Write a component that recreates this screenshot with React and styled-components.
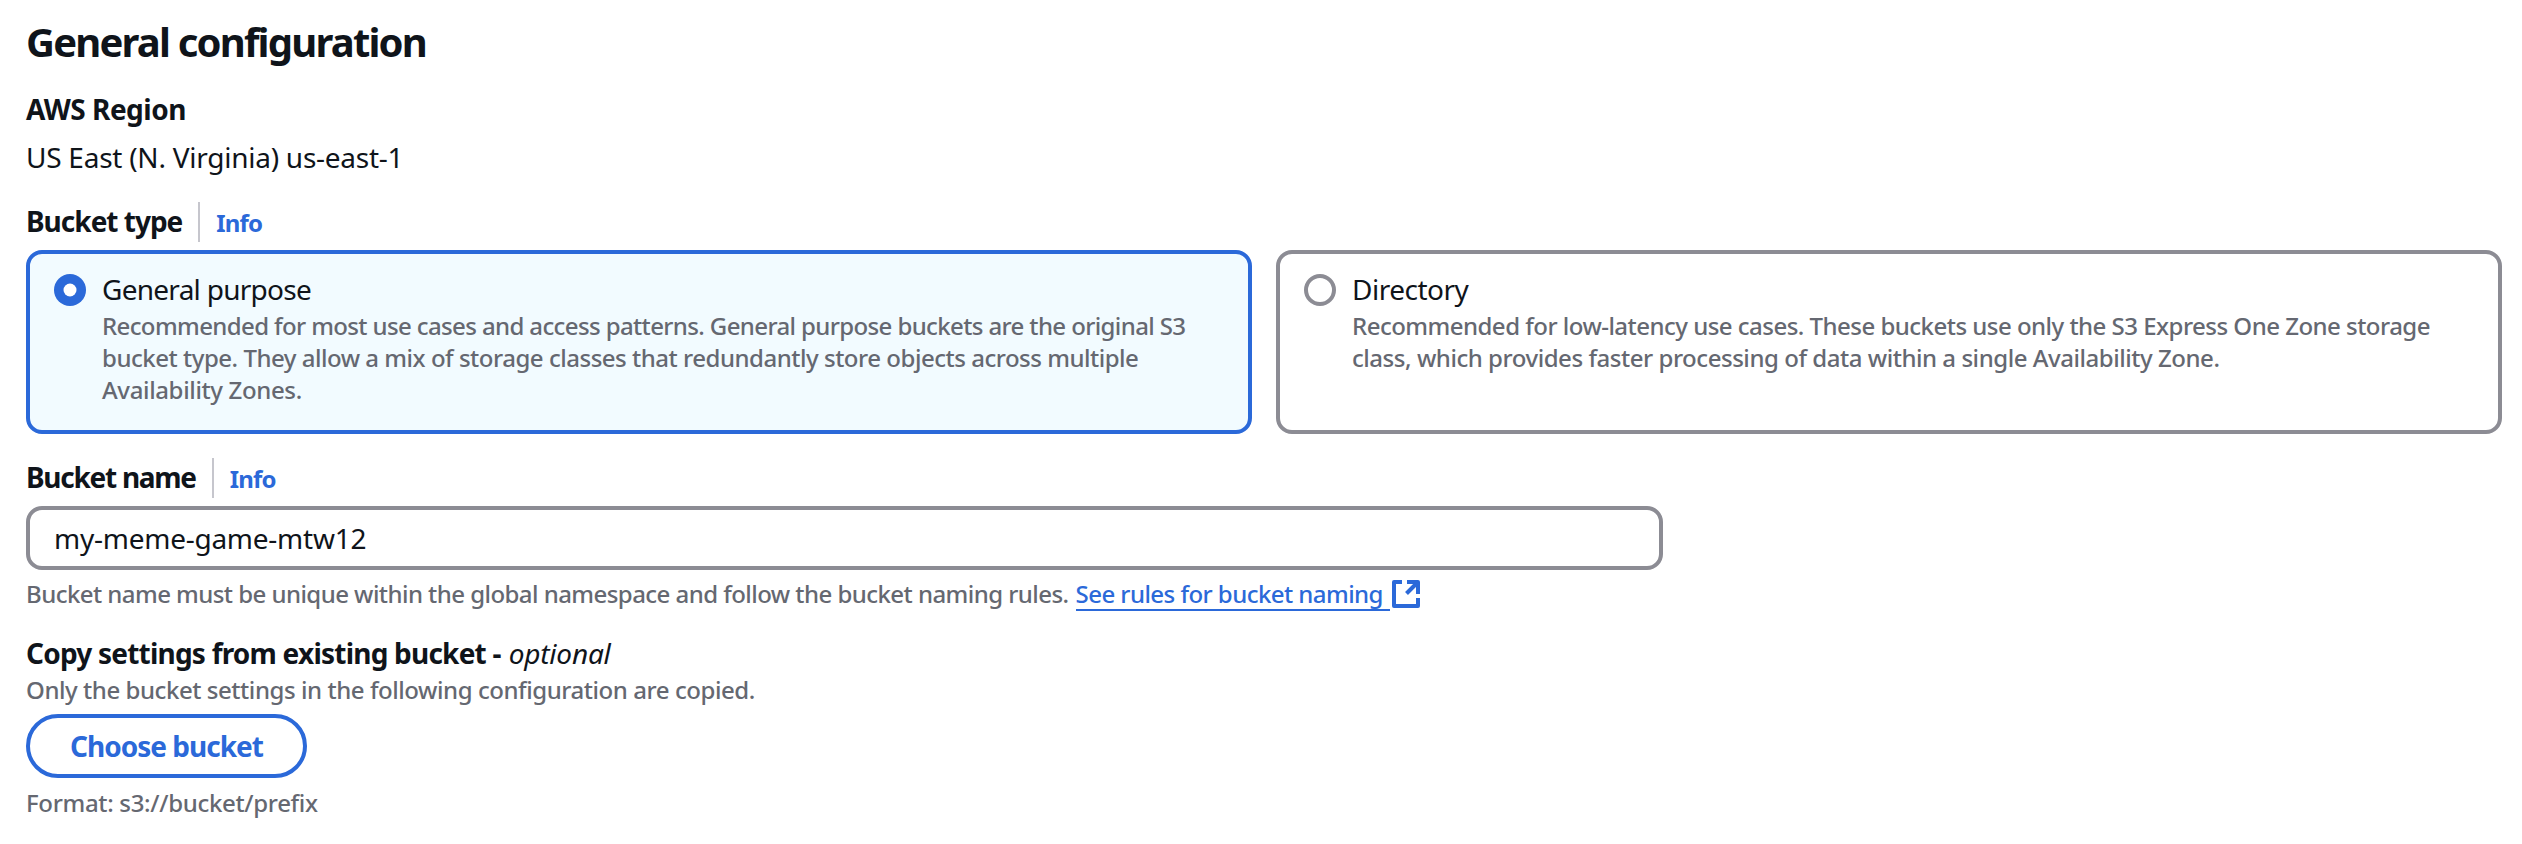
import React from 'react';
import styled, { createGlobalStyle } from 'styled-components';

const ink = '#0f141a';
const muted = '#656871';
const blue = '#2b69d9';
const grey = '#8c8c94';

const GlobalStyle = createGlobalStyle`
  * { box-sizing: border-box; }
  body {
    margin: 0;
    background: #fff;
    color: ${ink};
    font-family: "Noto Sans", "Open Sans", sans-serif;
  }
`;

const tracking = ({ $track = 0 }) => `letter-spacing: ${$track}px;`;

const Page = styled.main`
  display: flex;
  flex-direction: column;
  height: 844px;
  padding: 18px 20px 0 26px;
  white-space: nowrap;
`;

const Title = styled.h2`
  margin: 0 0 23px;
  font-size: 40px;
  font-weight: 700;
  line-height: 48px;
  ${tracking}
`;

const Label = styled.span`
  font-size: 28px;
  font-weight: 700;
  line-height: ${({ $line = 40 }) => $line}px;
  ${tracking}
`;

const Value = styled.span`
  font-size: 28px;
  font-weight: 400;
  line-height: 40px;
  ${tracking}
`;

const Region = styled.section`
  display: flex;
  flex-direction: column;
  gap: 8px;
  margin-bottom: 25px;
`;

const Field = styled.section`
  display: flex;
  flex-direction: column;
  gap: 8px;
  margin-bottom: ${({ $after = 24 }) => $after}px;
`;

const LabelRow = styled.div`
  display: flex;
  align-items: flex-start;
  height: 40px;
`;

const Divider = styled.span`
  width: 2px;
  height: 40px;
  margin: 0 16px;
  background: #c6c6cd;
`;

const InfoLink = styled.a`
  color: ${blue};
  font-size: 24px;
  font-weight: 700;
  line-height: 42px;
  letter-spacing: -0.85px;
`;

const Tiles = styled.div`
  display: grid;
  grid-template-columns: 1fr 1fr;
  gap: 24px;
`;

const Tile = styled.label`
  display: flex;
  gap: 16px;
  height: 184px;
  padding: 15px 24px;
  border: 4px solid ${({ $selected }) => ($selected ? blue : grey)};
  border-radius: 16px;
  background: ${({ $selected }) => ($selected ? '#f2fbff' : '#fff')};
`;

const RadioMark = styled.svg`
  flex: none;
  width: 32px;
  height: 32px;
  margin-top: 5px;
`;

const TileBody = styled.div`
  display: flex;
  flex-direction: column;
  gap: 1px;
`;

const Description = styled.div`
  display: flex;
  flex-direction: column;
`;

const Hint = styled.span`
  color: ${muted};
  font-size: 24px;
  font-weight: 500;
  line-height: 32px;
  ${tracking}
`;

const TextInput = styled.input`
  width: 1637px;
  height: 64px;
  padding: 0 24px;
  border: 4px solid ${grey};
  border-radius: 16px;
  outline: none;
  background: #fff;
  color: ${ink};
  font: 400 28px "Noto Sans", "Open Sans", sans-serif;
  letter-spacing: -0.25px;
`;

const HintRow = styled.div`
  display: flex;
  height: 32px;
`;

const RulesLink = styled.a`
  display: flex;
  gap: 2px;
  margin-left: 7px;
  color: ${blue};
`;

const RulesText = styled.span`
  height: 33px;
  padding-right: 7px;
  border-bottom: 2px solid ${blue};
  font-size: 24px;
  font-weight: 500;
  line-height: 32px;
  ${tracking}
`;

const ExternalSvg = styled.svg`
  width: 28px;
  height: 28px;
  margin-top: 2px;
`;

const CopySection = styled.section`
  display: flex;
  flex-direction: column;
  align-items: flex-start;
`;

const Heading = styled.div`
  display: flex;
  gap: 8px;
  margin-bottom: 1px;
`;

const Optional = styled.em`
  font-size: 28px;
  font-weight: 400;
  font-style: italic;
  line-height: 40px;
  ${tracking}
`;

const ChooseButton = styled.button`
  width: 281px;
  height: 64px;
  margin: 8px 0 9px;
  padding: 0;
  border: 4px solid ${blue};
  border-radius: 32px;
  background: #fff;
  color: ${blue};
  font: 700 28px "Noto Sans", "Open Sans", sans-serif;
  letter-spacing: -1px;
`;

function ExternalIcon() {
  return (
    <ExternalSvg viewBox="0 0 28 28" fill="none" stroke={blue} strokeWidth="4">
      <path d="M10 2H2v24h24v-8" strokeLinejoin="round" />
      <path d="M15 2h11v12" strokeLinejoin="round" />
      <path d="M26 2L14.5 13.5" />
    </ExternalSvg>
  );
}

function Radio({ selected }) {
  return (
    <RadioMark viewBox="0 0 32 32">
      {selected ? (
        <>
          <circle cx="16" cy="16" r="16" fill={blue} />
          <circle cx="16" cy="16" r="6.5" fill="#fff" />
        </>
      ) : (
        <circle cx="16" cy="16" r="14" fill="#fff" stroke={grey} strokeWidth="4" />
      )}
    </RadioMark>
  );
}

function BucketTile({ selected, name, nameTrack, lines }) {
  return (
    <Tile $selected={selected}>
      <Radio selected={selected} />
      <TileBody>
        <Value $track={nameTrack}>{name}</Value>
        <Description>
          {lines.map(([text, track]) => (
            <Hint key={text} $track={track}>{text}</Hint>
          ))}
        </Description>
      </TileBody>
    </Tile>
  );
}

export default function App() {
  return (
    <Page>
      <GlobalStyle />
      <Title $track={-1.8}>General configuration</Title>

      <Region>
        <Label $track={-0.5}>AWS Region</Label>
        <Value $track={-0.25}>US East (N. Virginia) us-east-1</Value>
      </Region>

      <Field>
        <LabelRow>
          <Label $line={38} $track={-1}>Bucket type</Label>
          <Divider />
          <InfoLink>Info</InfoLink>
        </LabelRow>
        <Tiles>
          <BucketTile
            selected
            name="General purpose"
            nameTrack={-0.73}
            lines={[
              ['Recommended for most use cases and access patterns. General purpose buckets are the original S3', -0.62],
              ['bucket type. They allow a mix of storage classes that redundantly store objects across multiple', -0.48],
              ['Availability Zones.', -0.36],
            ]}
          />
          <BucketTile
            name="Directory"
            nameTrack={-0.5}
            lines={[
              ['Recommended for low-latency use cases. These buckets use only the S3 Express One Zone storage', -0.52],
              ['class, which provides faster processing of data within a single Availability Zone.', -0.46],
            ]}
          />
        </Tiles>
      </Field>

      <Field $after={23}>
        <LabelRow>
          <Label $line={38} $track={-1.27}>Bucket name</Label>
          <Divider />
          <InfoLink>Info</InfoLink>
        </LabelRow>
        <TextInput defaultValue="my-meme-game-mtw12" />
        <HintRow>
          <Hint $track={-0.55}>Bucket name must be unique within the global namespace and follow the bucket naming rules.</Hint>
          <RulesLink>
            <RulesText $track={-0.55}>See rules for bucket naming</RulesText>
            <ExternalIcon />
          </RulesLink>
        </HintRow>
      </Field>

      <CopySection>
        <Heading>
          <Label $track={-0.78}>Copy settings from existing bucket -</Label>
          <Optional $track={-0.2}>optional</Optional>
        </Heading>
        <Hint $track={-0.44}>Only the bucket settings in the following configuration are copied.</Hint>
        <ChooseButton>Choose bucket</ChooseButton>
        <Hint $track={-0.32}>Format: s3://bucket/prefix</Hint>
      </CopySection>
    </Page>
  );
}
